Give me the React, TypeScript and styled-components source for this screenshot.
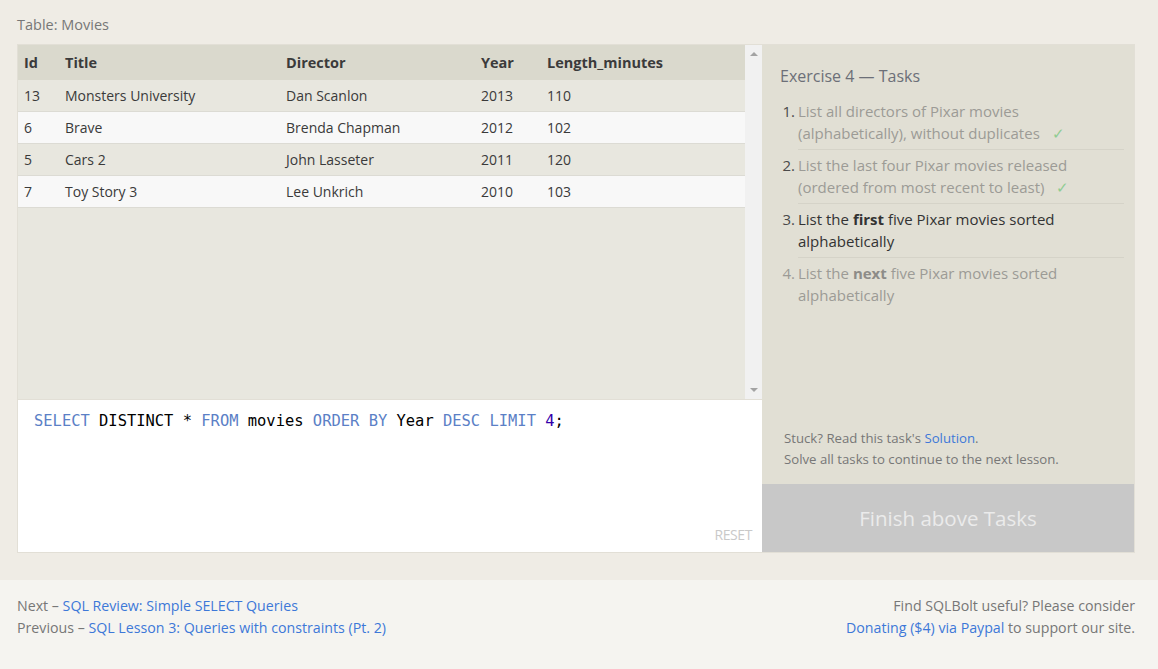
import React from "react";
import styled, { createGlobalStyle } from "styled-components";

const Global = createGlobalStyle`
  html, body { margin: 0; padding: 0; }
  body {
    background: #efece5;
    font-family: "Open Sans", "Liberation Sans", sans-serif;
    color: #333;
  }
`;

const Page = styled.div`
  min-height: 669px;
  display: flex;
  flex-direction: column;
`;

const Main = styled.div`
  padding: 14px 23px 27px 17px;
`;

const Caption = styled.div`
  font-size: 14.5px;
  line-height: 22px;
  color: #777;
  margin-bottom: 8px;
`;

const Frame = styled.div`
  display: grid;
  grid-template-columns: 744px 1fr;
  border: 1px solid #e2dfd6;
  height: 507px;
`;

const LeftCol = styled.div`
  display: grid;
  grid-template-rows: 355px 1fr;
`;

const TableArea = styled.div`
  display: grid;
  grid-template-columns: 1fr 17px;
  background: #e8e7df;
  border-bottom: 1px solid #e2dfd6;
`;

const TableWrap = styled.div`
  overflow: hidden;
`;

const Table = styled.table`
  width: 100%;
  border-collapse: collapse;
  font-size: 14px;
`;

const HeadCell = styled.th`
  background: #dad9cd;
  text-align: left;
  font-weight: 700;
  height: 35px;
  padding: 0 6px;
  color: #3b3b3b;
  font-size: 14.5px;
`;

const Row = styled.tr<{ $alt: boolean }>`
  background: ${(p) => (p.$alt ? "#f8f8f8" : "#e8e7df")};
`;

const Cell = styled.td`
  height: 31px;
  padding: 0 6px;
  color: #3a3a3a;
  border-bottom: 1px solid #dcdbd4;
`;

const ScrollBar = styled.div`
  background: #f1f1f1;
  display: flex;
  flex-direction: column;
  justify-content: space-between;
  align-items: center;
  padding: 5px 0;
`;

const Arrow = styled.div<{ $down?: boolean }>`
  width: 0;
  height: 0;
  border-left: 4px solid transparent;
  border-right: 4px solid transparent;
  ${(p) =>
    p.$down
      ? "border-top: 4px solid #a3a3a3; margin-bottom: 2px;"
      : "border-bottom: 4px solid #a3a3a3; margin-top: 2px;"}
`;

const Editor = styled.div`
  background: #fff;
  display: flex;
  flex-direction: column;
  justify-content: space-between;
  padding: 11px 10px 8px 16px;
`;

const Code = styled.div`
  font-family: "DejaVu Sans Mono", "Liberation Mono", monospace;
  font-size: 15.45px;
  line-height: 20px;
  color: #000;
  white-space: pre;
`;

const Kw = styled.span`
  color: #5b80c6;
`;

const Num = styled.span`
  color: #3300aa;
`;

const Reset = styled.div`
  align-self: flex-end;
  font-size: 14px;
  color: #c9c9c9;
  letter-spacing: -0.4px;
`;

const RightCol = styled.div`
  background: #e1dfd4;
  display: flex;
  flex-direction: column;
`;

const TaskBody = styled.div`
  flex: 1;
  padding: 20px 10px 0 18px;
  display: flex;
  flex-direction: column;
`;

const ExTitle = styled.div`
  font-size: 16px;
  line-height: 22px;
  color: #6c6f78;
  margin-bottom: 13px;
`;

const TaskList = styled.ol`
  margin: 0;
  padding: 0;
  list-style: none;
`;

const Task = styled.li<{ $active?: boolean }>`
  display: grid;
  grid-template-columns: 18px 1fr;
  font-size: 15px;
  line-height: 22px;
  color: ${(p) => (p.$active ? "#333" : "#9c9b96")};
`;

const TaskNum = styled.div<{ $dim?: boolean; $first?: boolean }>`
  text-align: right;
  padding-right: 3px;
  padding-top: ${(p) => (p.$first ? "0" : "5px")};
  color: ${(p) => (p.$dim ? "#9c9b96" : "#4a4a4a")};
`;

const TaskText = styled.div<{ $first?: boolean }>`
  padding: ${(p) => (p.$first ? "0" : "4px")} 0 5px 0;
  border-top: ${(p) => (p.$first ? "none" : "1px solid #d5d3c8")};
`;

const Check = styled.span`
  color: #8fcc92;
  margin-left: 8px;
`;

const Strong = styled.b<{ $dim?: boolean }>`
  font-weight: 700;
  color: ${(p) => (p.$dim ? "#8d8c88" : "#333")};
`;

const Hint = styled.div`
  margin-top: auto;
  font-size: 13.2px;
  line-height: 21px;
  color: #777;
  padding: 0 0 14px 4px;
`;

const Link = styled.a`
  color: #3d78d8;
  text-decoration: none;
`;

const FinishButton = styled.div`
  height: 68px;
  background: #c8c8c8;
  color: #ebebeb;
  font-size: 20.5px;
  display: flex;
  align-items: center;
  justify-content: center;
`;

const Footer = styled.footer`
  flex: 1;
  background: #f5f4f0;
  display: flex;
  justify-content: space-between;
  padding: 15px 23px 0 17px;
  font-size: 14.2px;
  line-height: 22px;
  color: #777;
`;

const FootCol = styled.div<{ $right?: boolean }>`
  text-align: ${(p) => (p.$right ? "right" : "left")};
`;

const rows = [
  ["13", "Monsters University", "Dan Scanlon", "2013", "110"],
  ["6", "Brave", "Brenda Chapman", "2012", "102"],
  ["5", "Cars 2", "John Lasseter", "2011", "120"],
  ["7", "Toy Story 3", "Lee Unkrich", "2010", "103"],
];

export default function App() {
  return (
    <Page>
      <Global />
      <Main>
        <Caption>Table: Movies</Caption>
        <Frame>
          <LeftCol>
            <TableArea>
              <TableWrap>
                <Table>
                  <colgroup>
                    <col style={{ width: 41 }} />
                    <col style={{ width: 221 }} />
                    <col style={{ width: 195 }} />
                    <col style={{ width: 66 }} />
                    <col />
                  </colgroup>
                  <thead>
                    <tr>
                      <HeadCell>Id</HeadCell>
                      <HeadCell>Title</HeadCell>
                      <HeadCell>Director</HeadCell>
                      <HeadCell>Year</HeadCell>
                      <HeadCell>Length_minutes</HeadCell>
                    </tr>
                  </thead>
                  <tbody>
                    {rows.map((r, i) => (
                      <Row key={i} $alt={i % 2 === 1}>
                        {r.map((c, j) => (
                          <Cell key={j}>{c}</Cell>
                        ))}
                      </Row>
                    ))}
                  </tbody>
                </Table>
              </TableWrap>
              <ScrollBar>
                <Arrow />
                <Arrow $down />
              </ScrollBar>
            </TableArea>
            <Editor>
              <Code>
                <Kw>SELECT</Kw> DISTINCT * <Kw>FROM</Kw> movies <Kw>ORDER</Kw>{" "}
                <Kw>BY</Kw> Year <Kw>DESC</Kw> <Kw>LIMIT</Kw> <Num>4</Num>;
              </Code>
              <Reset>RESET</Reset>
            </Editor>
          </LeftCol>
          <RightCol>
            <TaskBody>
              <ExTitle>Exercise 4 — Tasks</ExTitle>
              <TaskList>
                <Task>
                  <TaskNum $first>1.</TaskNum>
                  <TaskText $first>
                    List all directors of Pixar movies (alphabetically), without
                    duplicates <Check>✓</Check>
                  </TaskText>
                </Task>
                <Task>
                  <TaskNum>2.</TaskNum>
                  <TaskText>
                    List the last four Pixar movies released (ordered from most
                    recent to least) <Check>✓</Check>
                  </TaskText>
                </Task>
                <Task $active>
                  <TaskNum>3.</TaskNum>
                  <TaskText>
                    List the <Strong>first</Strong> five Pixar movies sorted
                    alphabetically
                  </TaskText>
                </Task>
                <Task>
                  <TaskNum $dim>4.</TaskNum>
                  <TaskText>
                    List the <Strong $dim>next</Strong> five Pixar movies sorted
                    alphabetically
                  </TaskText>
                </Task>
              </TaskList>
              <Hint>
                Stuck? Read this task's <Link href="#">Solution</Link>.
                <br />
                Solve all tasks to continue to the next lesson.
              </Hint>
            </TaskBody>
            <FinishButton>Finish above Tasks</FinishButton>
          </RightCol>
        </Frame>
      </Main>
      <Footer>
        <FootCol>
          Next – <Link href="#">SQL Review: Simple SELECT Queries</Link>
          <br />
          Previous – <Link href="#">SQL Lesson 3: Queries with constraints (Pt. 2)</Link>
        </FootCol>
        <FootCol $right>
          Find SQLBolt useful? Please consider
          <br />
          <Link href="#">Donating ($4) via Paypal</Link> to support our site.
        </FootCol>
      </Footer>
    </Page>
  );
}
